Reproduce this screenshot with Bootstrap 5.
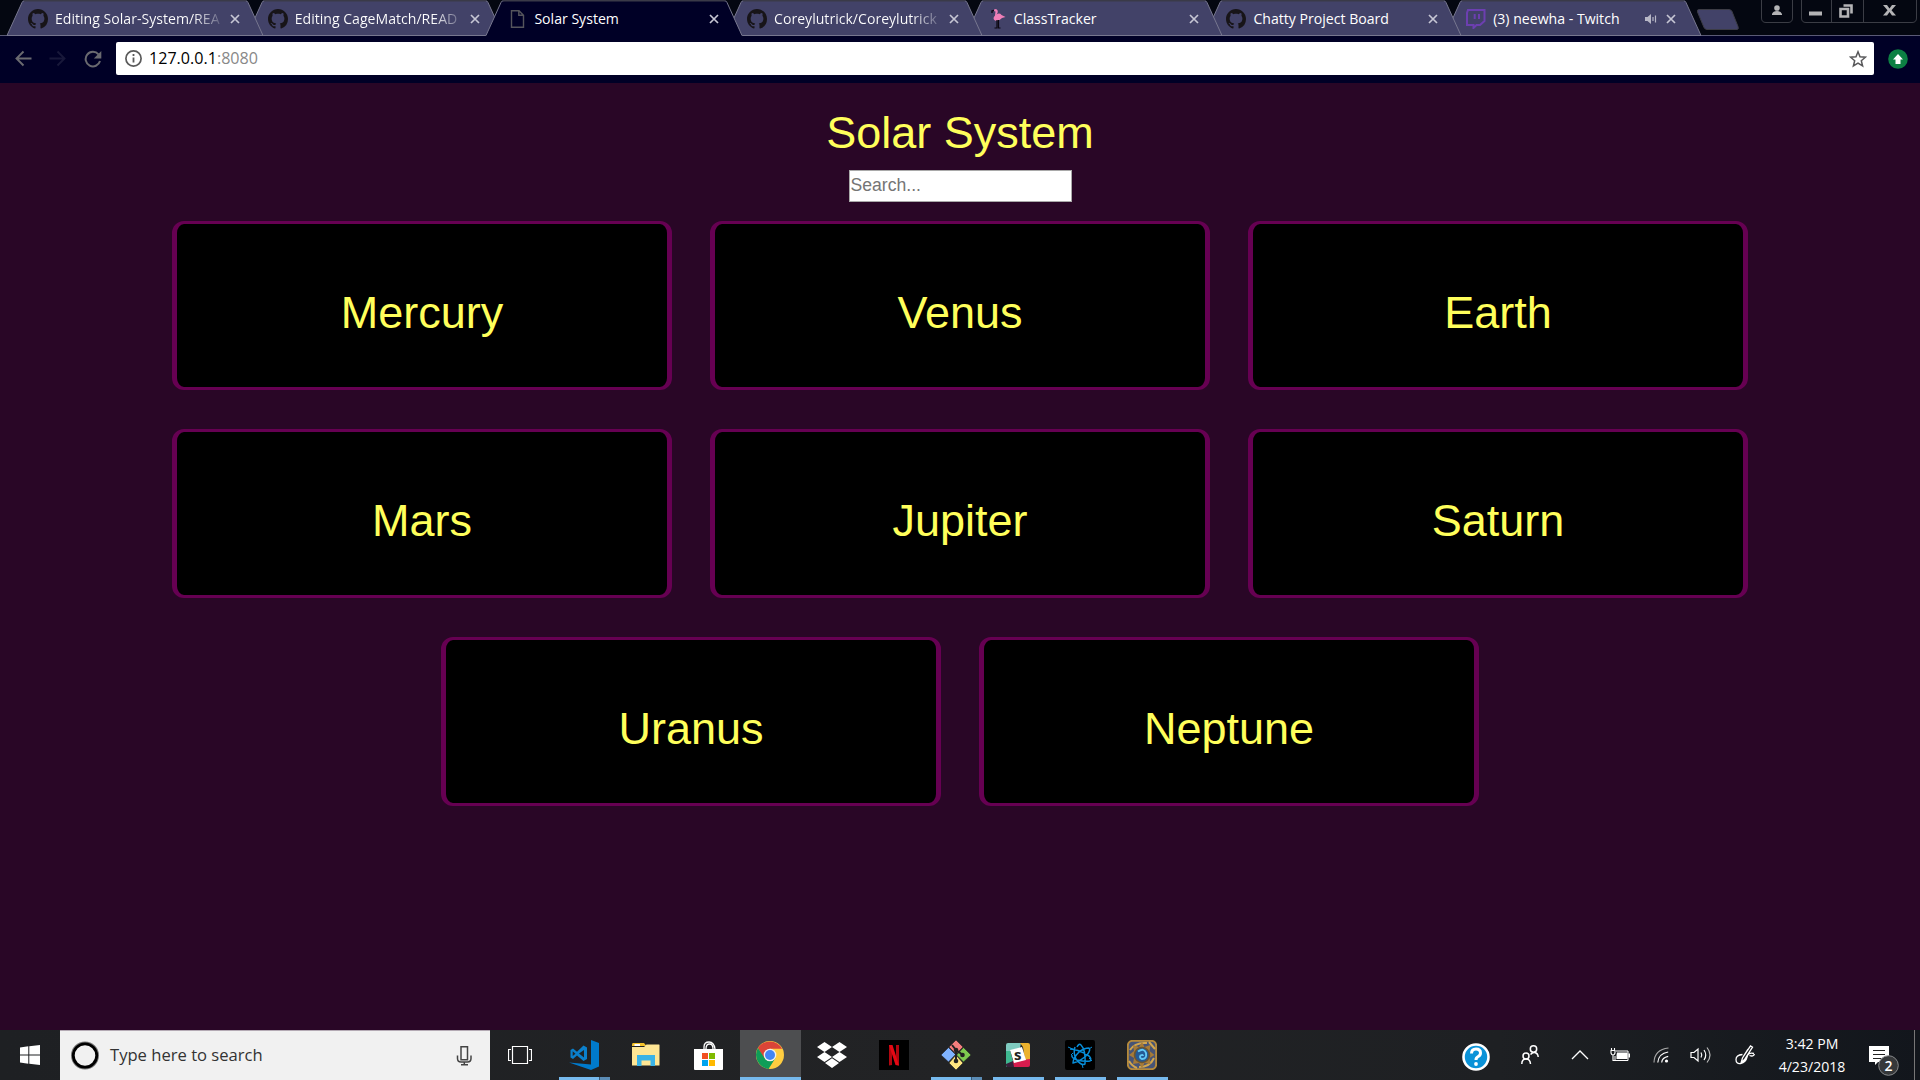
<!DOCTYPE html>
<html lang="en">
<head>
<meta charset="utf-8">
<title>Solar System</title>
<link href="https://cdn.jsdelivr.net/npm/bootstrap@5.3.0/dist/css/bootstrap.min.css" rel="stylesheet">
<script src="https://cdn.jsdelivr.net/npm/bootstrap@5.3.0/dist/js/bootstrap.bundle.min.js"></script>
<style>
html,body{height:100%;overflow:hidden}
body{font-family:"Open Sans","Noto Sans",sans-serif;background:#290626}
svg{display:block;flex:none}
.screen{width:1920px;height:1080px}
/* browser frame */
.tabstrip{height:36px;background:#040711;border-bottom:1px solid #5a5a75;padding-left:7px}
.btab{width:239.7px;height:36px;padding-left:21px;font-size:14.1px;color:#fff;z-index:1}
.btab .shape{position:absolute;left:0;top:0;overflow:visible;z-index:-1}
.btab.z7{z-index:1}.btab.z6{z-index:2}.btab.z5{z-index:3}.btab.z4{z-index:4}.btab.z2{z-index:6}.btab.z1{z-index:7}.btab.on{z-index:9}
.tabname{width:168px;margin-left:7px;white-space:nowrap;line-height:20px}
.faded{color:transparent;background:linear-gradient(90deg,#fff 138px,rgba(255,255,255,.15) 166px);-webkit-background-clip:text;background-clip:text}
.btab>*{margin-top:2px}.btab>.shape{margin-top:0}
.tabx{margin-left:7px}
.newtab{margin:9px 0 0 11px}
.winbtns{margin:0 3px 0 auto}
.toolbar{height:47px;background:#000026;padding:6px 0 8px 15px}
.omnibox{width:1758px;height:33px;background:#fff;border-radius:2px;margin-left:14px;padding:0 7px 0 9px;font-size:16.1px;color:#000}
.port{color:#888}
/* page */
.solar{font-family:"Liberation Sans",Arial,sans-serif;background:#290626;color:#ffff5b;height:947px;padding-top:24px}
.bigword{font-size:45px;line-height:52px;font-weight:400}
.finder{width:223px;height:32px;border:1px solid #a9a9a9;border-radius:0;padding:0 1px 2px;font-size:17.6px;background:#fff;margin-top:11px}
.finder::placeholder{color:#757575}
.finder:focus{outline:none}
.orbit{gap:39px 38px;margin-top:19px;width:1660px}
.planet{width:500px;height:169px;background:#000;border:solid #660052;border-width:3px 5px;border-radius:12px;padding-top:14px}
/* taskbar */
.taskbar{height:50px;background:linear-gradient(90deg,#1e2023 0,#222325 50%,#1e2023 78%,#12161c 100%);color:#fff}
.cortana{width:430px;background:#f1f1f1;border-top:1px solid #b4aab4;color:#333;font-size:16.6px;padding:0 18px 0 10px}
.app{width:62px;height:50px;padding-right:2px}
.app.run::after{content:"";position:absolute;left:5px;bottom:0;width:51px;height:3px;background:#76b9ed}
.app.multi::after{background:linear-gradient(90deg,#76b9ed 40px,#395876 40px,#395876 41px,#5b8cb5 41px)}
.app.front{width:61px;margin-right:1px;background:#4d4e50;padding:0 2px 0 0}
.app.front::after{left:0;width:61px}
.clock{width:80px;font-size:14.1px;line-height:23px}
.cell{height:50px}
.w60{width:60px}.w48{width:48px}.w52{width:52px}.w28{width:28px}.w54{width:54px}.w25{width:25px}.w64{width:64px}
.edge{width:1px;height:50px;background:#777;margin-left:15px;margin-right:5px}
</style>
</head>
<body>
<svg width="0" height="0" class="position-absolute">
<defs>
<symbol id="gh" viewBox="0 0 16 16"><path fill="#171418" d="M8 0C3.58 0 0 3.58 0 8c0 3.54 2.29 6.53 5.47 7.59.4.07.55-.17.55-.38 0-.19-.01-.82-.01-1.49-2.01.37-2.53-.49-2.69-.94-.09-.23-.48-.94-.82-1.13-.28-.15-.68-.52-.01-.53.63-.01 1.08.58 1.23.82.72 1.21 1.87.87 2.33.66.07-.52.28-.87.51-1.07-1.78-.2-3.64-.89-3.64-3.95 0-.87.31-1.59.82-2.15-.08-.2-.36-1.02.08-2.12 0 0 .67-.21 2.2.82.64-.18 1.32-.27 2-.27s1.36.09 2 .27c1.53-1.04 2.2-.82 2.2-.82.44 1.1.16 1.92.08 2.12.51.56.82 1.27.82 2.15 0 3.07-1.87 3.75-3.65 3.95.29.25.54.73.54 1.48 0 1.07-.01 1.93-.01 2.2 0 .21.15.46.55.38A8.01 8.01 0 0 0 16 8c0-4.42-3.58-8-8-8"/></symbol>
<symbol id="x" viewBox="0 0 10 10"><path d="M1 1l8 8M9 1L1 9" stroke="#c6c6d4" stroke-width="1.7" fill="none"/></symbol>
<symbol id="tab" viewBox="0 0 256 36" overflow="visible"><path d="M0 35.5L15 2.5Q16 .5 18 .5H238Q240 .5 241 2.5L256 35.5" fill="#424268" stroke="#77778f"/><path d="M17 .7H239" stroke="#3a3a48" stroke-width="1.4"/><path d="M0 35.5H256" stroke="#77778f"/></symbol>
<symbol id="tabon" viewBox="0 0 256 36" overflow="visible"><path d="M0 35.5L15 2.5Q16 .5 18 .5H238Q240 .5 241 2.5L256 35.5V37H0z" fill="#000026"/><path d="M0 35.5L15 2.5Q16 .5 18 .5H238Q240 .5 241 2.5L256 35.5" fill="none" stroke="#77778f"/><path d="M17 .7H239" stroke="#3a3a48" stroke-width="1.4"/></symbol>
</defs></svg>

<div class="screen d-flex flex-column">
<header>
  <div class="tabstrip d-flex align-items-start">
    <div class="btab z1 d-flex align-items-center position-relative"><svg class="shape" width="256" height="36"><use href="#tab"/></svg><svg width="20" height="20"><use href="#gh"/></svg><div class="tabname faded">Editing Solar-System/REA</div><svg class="tabx" width="10" height="10"><use href="#x"/></svg></div>
    <div class="btab z2 d-flex align-items-center position-relative"><svg class="shape" width="256" height="36"><use href="#tab"/></svg><svg width="20" height="20"><use href="#gh"/></svg><div class="tabname faded">Editing CageMatch/READ</div><svg class="tabx" width="10" height="10"><use href="#x"/></svg></div>
    <div class="btab on d-flex align-items-center position-relative"><svg class="shape" width="256" height="37" viewBox="0 0 256 37"><use href="#tabon" width="256" height="36"/></svg><svg width="20" height="20" viewBox="0 0 20 20"><path d="M4.500 1.700H12l4.500 4.500v12h-12zM11.800 1.700v4.600h4.700" fill="none" stroke="#55555c" stroke-width="1.4"/></svg><div class="tabname">Solar System</div><svg class="tabx" width="10" height="10"><use href="#x"/></svg></div>
    <div class="btab z4 d-flex align-items-center position-relative"><svg class="shape" width="256" height="36"><use href="#tab"/></svg><svg width="20" height="20"><use href="#gh"/></svg><div class="tabname faded">Coreylutrick/Coreylutrick</div><svg class="tabx" width="10" height="10"><use href="#x"/></svg></div>
    <div class="btab z5 d-flex align-items-center position-relative"><svg class="shape" width="256" height="36"><use href="#tab"/></svg><svg width="20" height="20" viewBox="0 0 20 20"><g transform="translate(1.500 0)"><path d="M5 2q0-2 2.500-2 2.500 1 1.500 4l-1 1.500q3-2 5 .5l4 2-3.500 1q-3 3.500-7 2.500-3-2 0-5l.500-4z" fill="#f07fb8"/><path d="M5.500 1.300L3.500 2v2" stroke="#0b0710" stroke-width="1.400" fill="none"/><path d="M8.500 11v8H6M10 11v8h2" stroke="#0b0710" stroke-width="1.200" fill="none"/></g></svg><div class="tabname">ClassTracker</div><svg class="tabx" width="10" height="10"><use href="#x"/></svg></div>
    <div class="btab z6 d-flex align-items-center position-relative"><svg class="shape" width="256" height="36"><use href="#tab"/></svg><svg width="20" height="20"><use href="#gh"/></svg><div class="tabname">Chatty Project Board</div><svg class="tabx" width="10" height="10"><use href="#x"/></svg></div>
    <div class="btab z7 d-flex align-items-center position-relative"><svg class="shape" width="256" height="36"><use href="#tab"/></svg><svg width="20" height="20" viewBox="0 0 20 20"><path d="M2 1h16.500v11L14 16h-3.500l-3 3v-3H1V4zM8.700 5v5M13 5v5" fill="none" stroke="#6c3fb0" stroke-width="2"/></svg><div class="tabname" style="width:141px">(3) neewha - Twitch</div><svg style="margin-left:10px" width="14" height="12" viewBox="0 0 14 12"><path d="M1 4h2.500L7 1v10L3.500 8H1z" fill="#b7b7c6"/><path d="M9 4v4M11.500 2.500v7" stroke="#b7b7c6" stroke-width="1.2"/></svg><svg style="margin-left:8px" width="10" height="10"><use href="#x"/></svg></div>
    <svg class="newtab" width="44" height="22" viewBox="0 0 44 22"><path d="M3 .5h30q2 0 3 2l6 15q1 3-1 3H11q-2 0-3-2L1.500 3Q.700.500 3 .500z" fill="#424268" stroke="#3c3c46"/></svg>
    <svg class="winbtns" width="156" height="24" viewBox="0 0 156 24"><path d="M.5 0v18q0 4.500 4.500 4.500h22q4.500 0 4.500-4.500V0M40.500 0v18q0 4.500 4.500 4.500h106q4.500 0 4.500-4.500V0M70.500 0v22M102.500 0v22" fill="none" stroke="#3b3d45"/><g fill="#b4b4b6"><circle cx="16" cy="8" r="2.800"/><path d="M11 15v-1q1-3 5-3t5 3v1zM48 11.500h13v4H48zM122 5h4l2.500 3.500L131 5h4l-4.500 5.200L135 15.500h-4l-2.500-3.500L126 15.500h-4l4.500-5.300z"/></g><path d="M79.500 9h7.500v7.500h-7.500zM82.500 5.500h8v8" fill="none" stroke="#b4b4b6" stroke-width="2.600"/></svg>
  </div>
  <div class="toolbar d-flex align-items-center">
    <svg width="17" height="17" viewBox="0 0 17 17"><path d="M16.500 8.500H1.500M8.500 1.500l-7 7 7 7" fill="none" stroke="#6a6a70" stroke-width="1.900"/></svg>
    <svg style="margin-left:17px;margin-right:18px" width="17" height="17" viewBox="0 0 17 17"><path d="M.500 8.500h15M8.500 1.500l7 7-7 7" fill="none" stroke="#18183a" stroke-width="1.900"/></svg>
    <svg width="18" height="18" viewBox="0 0 18 18"><path d="M14.500 4.300A7.300 7.300 0 1 0 16 11" fill="none" stroke="#6a6a70" stroke-width="2"/><path d="M17.300 1v7.500H9.800z" fill="#6a6a70"/></svg>
    <div class="omnibox d-flex align-items-center"><svg width="17" height="17" viewBox="0 0 17 17"><circle cx="8.500" cy="8.500" r="7.600" fill="none" stroke="#5a5a5a" stroke-width="1.700"/><path d="M8.500 7.500v5M8.500 4v2" stroke="#5a5a5a" stroke-width="1.800"/></svg><span style="margin-left:7px">127.0.0.1<span class="port">:8080</span></span><svg class="ms-auto" width="18" height="18" viewBox="0 0 18 18"><path d="M9 1.800l2 5 5.400.400-4.100 3.500 1.300 5.300L9 13.100 4.400 16l1.300-5.300L1.600 7.200 7 6.800z" fill="none" stroke="#58585a" stroke-width="1.500"/></svg></div>
    <svg style="margin-left:14px" width="20" height="20" viewBox="0 0 20 20"><circle cx="10" cy="10" r="9.800" fill="#0c8043"/><path d="M10 5l5 5.500h-2.500V15h-5v-4.500H5z" fill="#fff"/></svg>
  </div>
</header>

<main class="solar d-flex flex-column align-items-center">
  <h1 class="bigword m-0">Solar System</h1>
  <input class="finder" type="text" placeholder="Search...">
  <section class="orbit d-flex flex-wrap justify-content-center">
    <div class="planet d-flex align-items-center justify-content-center bigword">Mercury</div>
    <div class="planet d-flex align-items-center justify-content-center bigword">Venus</div>
    <div class="planet d-flex align-items-center justify-content-center bigword">Earth</div>
    <div class="planet d-flex align-items-center justify-content-center bigword">Mars</div>
    <div class="planet d-flex align-items-center justify-content-center bigword">Jupiter</div>
    <div class="planet d-flex align-items-center justify-content-center bigword">Saturn</div>
    <div class="planet d-flex align-items-center justify-content-center bigword">Uranus</div>
    <div class="planet d-flex align-items-center justify-content-center bigword">Neptune</div>
  </section>
</main>

<footer class="taskbar d-flex">
  <div class="cell w60 d-flex align-items-center justify-content-center"><svg width="20" height="20" viewBox="0 0 20 20"><path d="M0 2.500l8.300-1.200v8.200H0zM9.300 1.200L20 0v9.500H9.300zM0 10.500h8.300v8.200L0 17.500zM9.300 10.500H20V20L9.300 18.800z" fill="#fff"/></svg></div>
  <div class="cortana d-flex align-items-center"><svg width="30" height="30" viewBox="0 0 30 30"><circle cx="15" cy="14.500" r="12.500" fill="none" stroke="#777" stroke-width="3"/><circle cx="15" cy="14.500" r="11.700" fill="#f1f1f1" stroke="#000" stroke-width="2.800"/></svg><span style="margin-left:10px">Type here to search</span><svg class="ms-auto" width="16" height="20" viewBox="0 0 16 20"><path d="M5 .7h6.500v13H5zM1.500 9.500v3q0 3.500 3.500 3.500h6.500q3.500 0 3.500-3.500v-3M8.300 16v2.800M5 18.800h7" fill="none" stroke="#444" stroke-width="1.500"/></svg></div>
  <div class="cell w60 d-flex align-items-center justify-content-center"><svg width="24" height="18" viewBox="0 0 24 18"><path d="M4.500.500h15v17h-15zM3 3.500H.500v11H3M21 3.500h2.500v11H21" fill="none" stroke="#fff" stroke-width="1.200"/></svg></div>
  <nav class="d-flex" style="margin-left:4px">
    <div class="app run multi position-relative d-flex align-items-center justify-content-center"><svg width="30" height="30" viewBox="0 0 30 30"><path d="M22 0l8 3v23.500L22 30 0 22.500l22 2z" fill="#007acc"/><path d="M14.500 5.500L18 7.500v11.500l-3.500 2L8 15.500l-4 3.500-2.500-1.500V10L4 8.500l4 3.300zM15 10L10 13.500l5 4zM3.700 11.300v4.800L6.500 13.700z" fill="#0b80cc" fill-rule="evenodd"/></svg></div>
    <div class="app d-flex align-items-center justify-content-center"><svg width="28" height="26" viewBox="0 0 28 26"><path d="M0 4V2.500Q0 1 1 1h11l2.500 3z" fill="#f5c22b"/><path d="M2.500 2H8v2H2.500z" fill="#fff"/><path d="M0 5h12l2.500-2.500h12.500q.500 0 .500.500v20.500H0z" fill="#ffe694"/><path d="M5 13h18v11h-4.500v-5.500h-9V24H5z" fill="#3bb3e6"/></svg></div>
    <div class="app d-flex align-items-center justify-content-center"><svg width="29" height="29" viewBox="0 0 29 29"><path d="M10 8V6q0-5 5-5t6 7M12 8q0-5 3.500-5T19 8" fill="none" stroke="#fff" stroke-width="1.300"/><path d="M0 8h29v20q0 1-1 1H1q-1 0-1-1z" fill="#fff"/><path d="M8 12h6v6H8z" fill="#f25022"/><path d="M15 12h6v6h-6z" fill="#7fba00"/><path d="M8 19h6v6H8z" fill="#00a4ef"/><path d="M15 19h6v6h-6z" fill="#ffb900"/></svg></div>
    <div class="app run front position-relative d-flex align-items-center justify-content-center"><svg width="28" height="28" viewBox="0 0 28 28"><circle cx="14" cy="14" r="14" fill="#ffcd40"/><path d="M1.900 7A14 14 0 0 1 26.100 7.700H14L8 17.500z" fill="#db4437"/><path d="M1.900 7A14 14 0 0 0 12.500 27.900L19.500 17 14 20 8.500 17z" fill="#0f9d58"/><circle cx="14" cy="14" r="6.300" fill="#f1f1f1"/><circle cx="14" cy="14" r="5" fill="#4285f4"/></svg></div>
    <div class="app d-flex align-items-center justify-content-center"><svg width="30" height="26" viewBox="0 0 30 26"><path d="M7.500 0l7.500 5-7.500 5L0 5zM22.500 0L30 5l-7.500 5L15 5zM7.500 10l7.500 5-7.500 5L0 15zM22.500 10l7.500 5-7.500 5-7.500-5zM15 16.300l7 4.700-7 5-7-5z" fill="#fff"/></svg></div>
    <div class="app d-flex align-items-center justify-content-center"><svg width="30" height="30" viewBox="0 0 30 30"><path d="M0 0h30v30H0z" fill="#000"/><path d="M10 5h3v20l-3 .500zM17 5h3v20.500L17 25z" fill="#b1060f"/><path d="M10 5h3.500l6.500 20.500L16.500 25z" fill="#e50914"/></svg></div>
    <div class="app run multi position-relative d-flex align-items-center justify-content-center"><svg width="30" height="30" viewBox="0 0 30 30"><g stroke="#222" stroke-width=".6" stroke-linejoin="round"><path d="M15 0l7 7-7 7-7-7z" fill="#f47d7d"/><path d="M7.500 7.500l7 7-7 7.500L0 15z" fill="#80b3ff"/><path d="M22.500 7.500L30 15l-7.500 7-7-7z" fill="#7ecb4f"/><path d="M15 15l7 8-7 7-7-7z" fill="#ffe680"/></g><path d="M11 5l4 5v11M15 10l7 5" fill="none" stroke="#222" stroke-width="2"/><circle cx="15" cy="10" r="2.300" fill="#222"/><circle cx="15" cy="21" r="2.300" fill="#222"/><circle cx="21.500" cy="15" r="2.300" fill="#222"/></svg></div>
    <div class="app run position-relative d-flex align-items-center justify-content-center"><svg width="24" height="24" viewBox="0 0 24 24"><path d="M0 2q0-2 2-2h13l-1 5L4 8l3 11-7 3z" fill="#7fcbc0"/><path d="M0 8h4l3 11-7 5z" fill="#3eb890"/><path d="M14 0h8q2 0 2 2v16l-5-1-2-13z" fill="#ecb22e"/><path d="M7 18l17-2v6q0 2-2 2H4z" fill="#d61c4e"/><path d="M0 21l7-3 1 6H2q-2 0-2-2z" fill="#39203c"/><path d="M4 7l12-3 4 13-12 3z" fill="#fff"/><text x="8" y="16.800" font-family="Open Sans" font-weight="700" font-size="15" fill="#222">s</text></svg></div>
    <div class="app run position-relative d-flex align-items-center justify-content-center"><svg width="30" height="30" viewBox="0 0 30 30"><rect width="30" height="30" rx="2" fill="#000"/><g fill="none" stroke="#078dd8" stroke-width="1.500" stroke-linejoin="round"><path d="M5 9q8 0 19 7 3 3 1 5-5 1-13-1-6-2-5-5M12 7q2-4 4-2 5 5 4 19-4 2-9-5-3-6-1-12M8 23q0-5 6-11 5-4 10-4 2 2-2 7-6 6-14 8z"/><path d="M3 7l7 3M6 15l2-2M24 9l3-2M17 24l1 4M24 18l3 3" stroke-width="1"/></g></svg></div>
    <div class="app run position-relative d-flex align-items-center justify-content-center"><svg width="30" height="30" viewBox="0 0 30 30"><rect x=".8" y=".8" width="28.400" height="28.400" rx="5" fill="#475476" stroke="#b68a3b" stroke-width="2"/><path d="M3 10Q8 2 20 3M27 18q-4 9-15 9M2 21q3 5 8 7M22 2l6 7" stroke="#d1a64f" stroke-width="2" fill="none"/><path d="M15 2l2.500 5 6-2-1 6 5 4-5 3 1 6-6-1-2.500 5-3-5-6 1 1-6-5-3 5-4-1-6 6 2z" fill="#a67b38"/><circle cx="15" cy="15" r="7.500" fill="#245a94" stroke="#6d552f" stroke-width="1.600"/><path d="M11 11.500q6-4 8 1.500 1 6-4 6-3-1-1.500-3.500 2.500-1.500 2.500.5" fill="none" stroke="#61c9f5" stroke-width="1.900"/></svg></div>
  </nav>
  <div class="d-flex ms-auto align-items-center">
    <div class="cell w60 d-flex align-items-center justify-content-center"><svg class="mt-1" width="28" height="28" viewBox="0 0 28 28"><circle cx="14" cy="14" r="12.500" fill="#0a92d8" stroke="#fff" stroke-width="2.600"/><path d="M9.500 10.500q0-4.500 4.500-4.500t4.500 4q0 2.300-2.300 3.500T14 17" fill="none" stroke="#fff" stroke-width="3"/><circle cx="14" cy="21" r="1.900" fill="#fff"/></svg></div>
    <div class="cell w48 d-flex align-items-center justify-content-center"><svg width="18" height="20" viewBox="0 0 18 20"><g fill="none" stroke="#fff" stroke-width="1.500"><circle cx="12.500" cy="4" r="3.200"/><circle cx="5" cy="11" r="3"/><path d="M.8 19q0-5 4.200-5t4.500 5M9.500 9.500q2-2.300 4-2 3.500.5 3.700 4.500"/></g></svg></div>
    <div class="cell w52 d-flex align-items-center justify-content-center"><svg width="18" height="10" viewBox="0 0 18 10"><path d="M1 9l8-8 8 8" fill="none" stroke="#fff" stroke-width="1.300"/></svg></div>
    <div class="cell w28 d-flex align-items-center justify-content-center"><svg width="20" height="14" viewBox="0 0 20 14"><path d="M6 3h12v9.500H5V8" fill="none" stroke="#fff"/><path d="M7 4.500h10.500V11H6.500V7zM18.500 5.500H20v4h-1.500z" fill="#fff"/><path d="M1 2.500h4V5q-.500 2-2 2T1 5zM1.500 0v2.500M4.500 0v2.500M3 7v5.500h3" fill="none" stroke="#fff" stroke-width="1.100"/></svg></div>
    <div class="cell w54 d-flex align-items-center justify-content-center"><svg width="16" height="16" viewBox="0 0 16 16"><circle cx="13.500" cy="14" r="1.600" fill="#fff"/><path d="M8.700 15.500q.300-5 6.500-6.200M4.800 15.500Q5.500 6.500 15.200 5" stroke="#fff" stroke-width="1.200" fill="none"/><path d="M1 15.500Q1.500 2.500 15.500 1" stroke="#aaa" stroke-width="1.100" fill="none"/></svg></div>
    <div class="cell w25 d-flex align-items-center justify-content-center"><svg width="22" height="18" viewBox="0 0 22 18"><path d="M1 6.500h3L8 3v12l-4-3.500H1zM11 6.500q1.500 2.500 0 5M14 4q3.500 5 0 10" fill="none" stroke="#fff" stroke-width="1.200"/><path d="M17 1.500q6 7.500 0 15" fill="none" stroke="#bbb" stroke-width="1.200"/></svg></div>
    <div class="cell w64 d-flex align-items-center justify-content-center"><svg width="20" height="20" viewBox="0 0 20 20"><path d="M6 18l1.500-5L15.500 1l2 1.200-8 12.300zM7.500 9.500Q1 10 1 14.500t4.500 4Q11 17 12 12t7-3.500M13 4l-5 8M19.500 9q-1 3-5 1.500" fill="none" stroke="#fff" stroke-width="1.300"/></svg></div>
    <div class="clock text-center" style="margin:0 -5px">3:42 PM<br>4/23/2018</div>
    <svg style="margin-left:22px;margin-top:10px" width="30" height="31" viewBox="0 0 30 31"><path d="M0 1h20v16H9l-3 3v-3H0z" fill="#fff"/><path d="M4 5.500h12M4 9.500h12M4 13.500h8" stroke="#222" stroke-width="1.200"/><circle cx="19.500" cy="20.500" r="9.800" fill="#36383a" stroke="#87898b"/><text x="19.500" y="25.500" text-anchor="middle" font-family="Open Sans" font-weight="600" font-size="14" fill="#fff">2</text></svg>
    <div class="edge"></div>
  </div>
</footer>
</div>
</body>
</html>
